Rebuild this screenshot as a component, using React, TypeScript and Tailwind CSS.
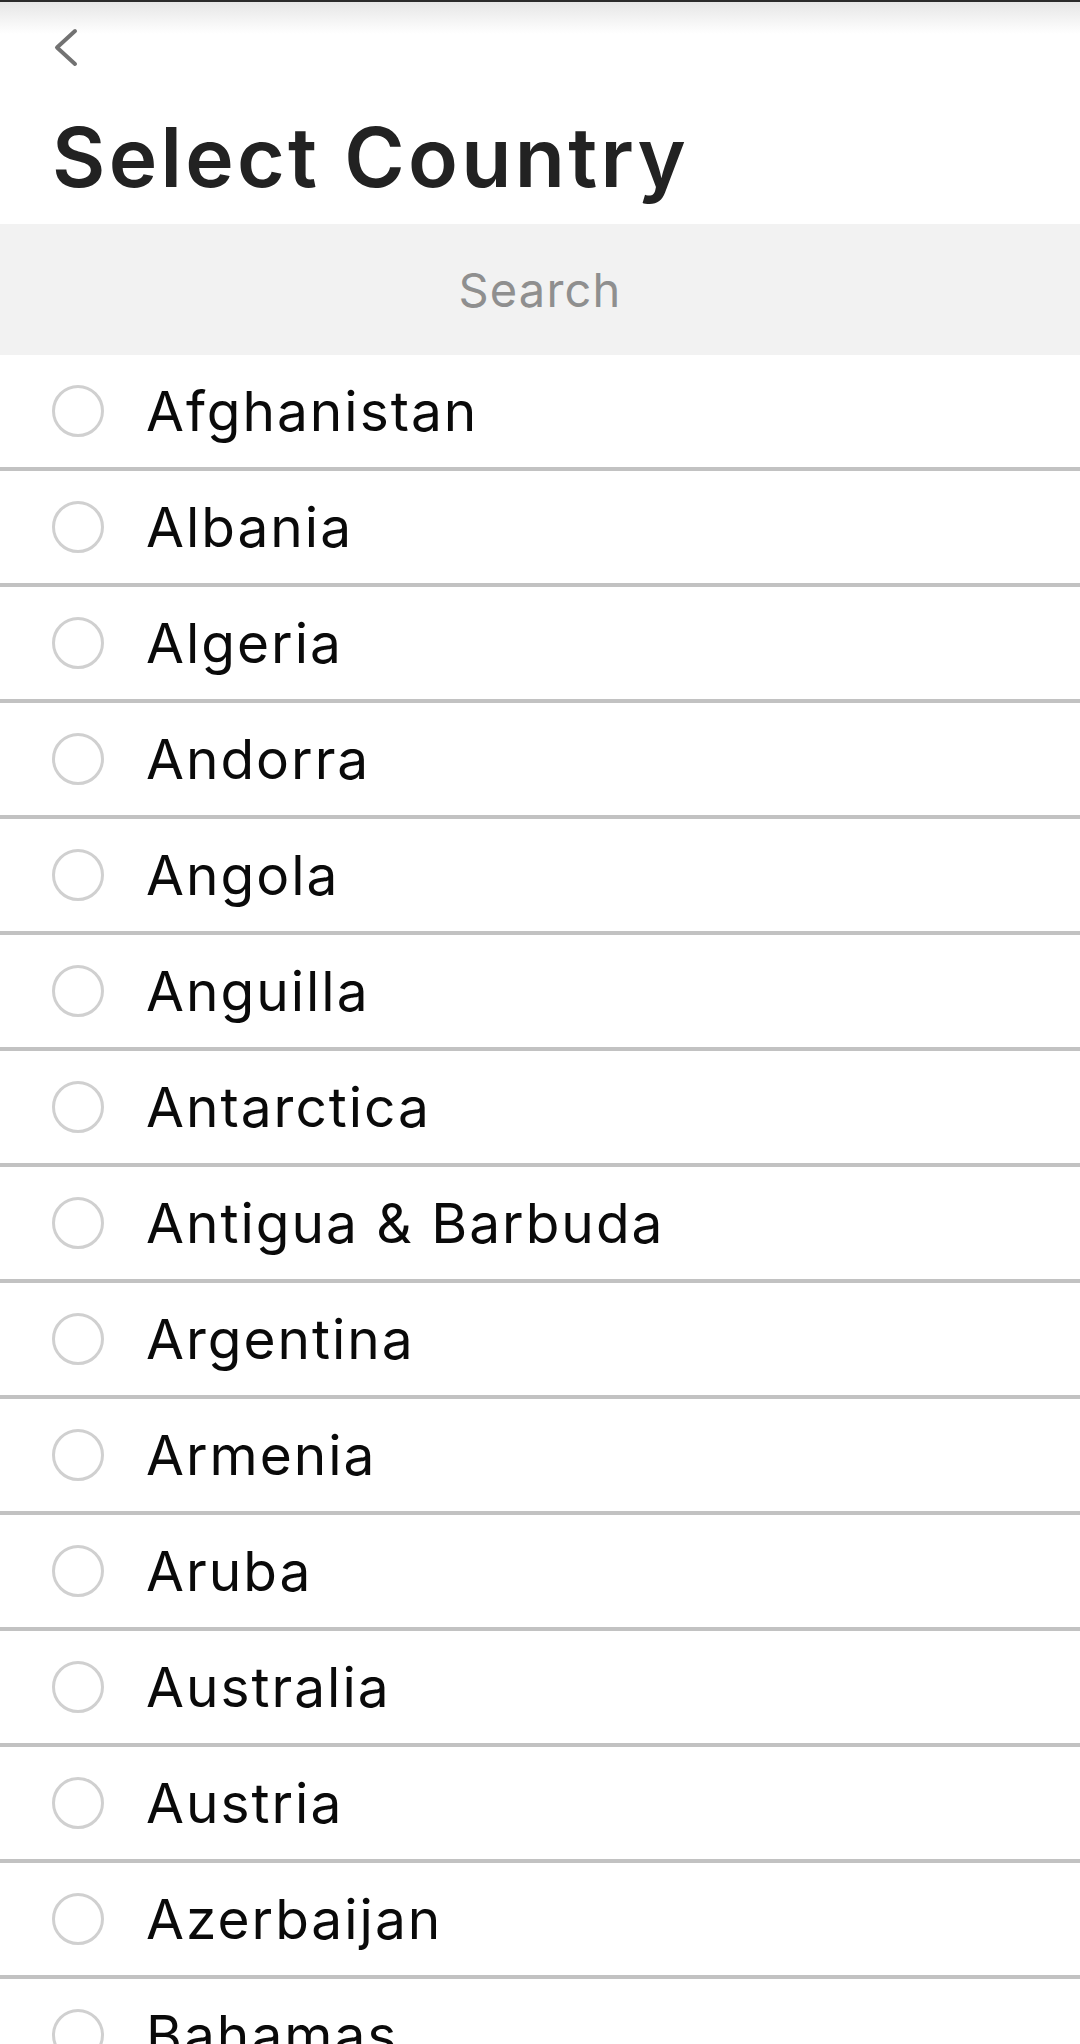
import React from "react";

const countries = [
  "Afghanistan",
  "Albania",
  "Algeria",
  "Andorra",
  "Angola",
  "Anguilla",
  "Antarctica",
  "Antigua & Barbuda",
  "Argentina",
  "Armenia",
  "Aruba",
  "Australia",
  "Austria",
  "Azerbaijan",
  "Bahamas",
];

export default function App() {
  return (
    <div
      className="w-[1080px] h-[2044px] overflow-hidden bg-white"
      style={{ fontFamily: "Inter, 'Noto Sans', sans-serif" }}
    >
      <div className="h-[224px] bg-[linear-gradient(to_bottom,#2b2b2b_0px,#2b2b2b_2px,#e6e6e6_2px,#ffffff_34px)]">
        <div className="pt-[28px] pl-[54px]">
          <svg width="24" height="40" viewBox="0 0 24 40" className="block">
            <polyline
              points="21,3 3,19.5 21,36"
              fill="none"
              stroke="#727272"
              strokeWidth="4"
              strokeLinecap="round"
              strokeLinejoin="round"
            />
          </svg>
        </div>
        <h1 className="mt-[49px] ml-[52px] text-[82px] leading-[82px] font-semibold text-[#222222] tracking-[3.3px]">
          Select Country
        </h1>
      </div>
      <div className="h-[131px] bg-[#f2f2f2] flex items-center justify-center">
        <span className="text-[47px] leading-[47px] text-[#8f8f8f] tracking-[1.2px]">
          Search
        </span>
      </div>
      <div>
        {countries.map((c) => (
          <div
            key={c}
            className="h-[116px] border-b-[4px] border-[#c2c2c2] flex items-center"
          >
            <div className="ml-[52px] w-[52px] h-[52px] rounded-full border-[3px] border-[#d0d0d0] shrink-0" />
            <span className="ml-[42px] text-[55px] leading-[55px] text-[#0a0a0a] tracking-[2px] whitespace-nowrap">
              {c}
            </span>
          </div>
        ))}
      </div>
    </div>
  );
}
